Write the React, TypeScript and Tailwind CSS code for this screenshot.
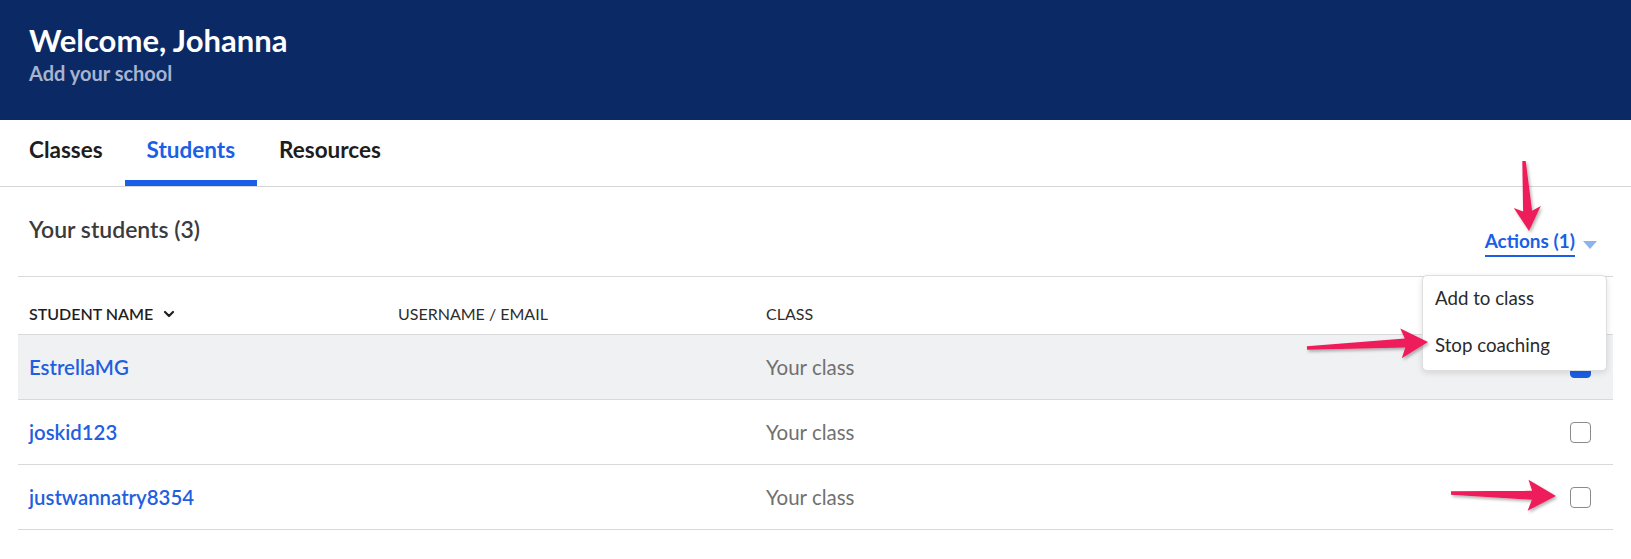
import React from 'react';
import { ChevronDown } from 'lucide-react';

const students = [
    { name: 'EstrellaMG', className: 'Your class', checked: true },
    { name: 'joskid123', className: 'Your class', checked: false },
    { name: 'justwannatry8354', className: 'Your class', checked: false },
];

// tapered annotation arrow, tail -> tip
function arrowPoints(tx: number, ty: number, px: number, py: number, headLen: number, headW: number, tailW = 3.5, neckW = 9) {
    const dx = px - tx;
    const dy = py - ty;
    const len = Math.hypot(dx, dy);
    const ux = dx / len;
    const uy = dy / len;
    const nx = -uy;
    const ny = ux;
    const bx = px - ux * headLen;
    const by = py - uy * headLen;
    const nbx = px - ux * (headLen - 4);
    const nby = py - uy * (headLen - 4);
    const pts = [
        [tx + nx * tailW / 2, ty + ny * tailW / 2],
        [nbx + nx * neckW / 2, nby + ny * neckW / 2],
        [bx + nx * headW / 2, by + ny * headW / 2],
        [px, py],
        [bx - nx * headW / 2, by - ny * headW / 2],
        [nbx - nx * neckW / 2, nby - ny * neckW / 2],
        [tx - nx * tailW / 2, ty - ny * tailW / 2],
    ];
    return pts.map((p) => p.map((v) => v.toFixed(1)).join(',')).join(' ');
}

const Arrows: React.FC = () => (
    <svg className="pointer-events-none absolute left-0 top-0" width="1631" height="559" viewBox="0 0 1631 559">
        <defs>
            <filter id="arrowShadow" x="-20%" y="-20%" width="140%" height="140%">
                <feDropShadow dx="1.5" dy="2" stdDeviation="1.5" floodColor="#000" floodOpacity="0.3" />
            </filter>
        </defs>
        <g fill="#ee1d5a" filter="url(#arrowShadow)">
            <polygon points={arrowPoints(1524, 161, 1529, 231, 24, 27)} />
            <polygon points={arrowPoints(1307, 348, 1428, 342, 27, 30)} />
            <polygon points={arrowPoints(1451, 493, 1556, 496, 28, 31)} />
        </g>
    </svg>
);

const Checkbox: React.FC<{ checked: boolean }> = ({ checked }) => (
    <div
        className={
            checked
                ? 'w-[21px] h-[21px] rounded-[4px] bg-[#1a5fe6] border border-[#1a5fe6]'
                : 'w-[21px] h-[21px] rounded-[4px] bg-white border-[1.5px] border-[#8a8a8a]'
        }
    />
);

export default function App() {
    return (
        <div className="relative w-[1631px] h-[559px] overflow-hidden bg-white font-['Lato',sans-serif]">
            {/* header */}
            <div className="h-[120px] bg-[#0b2a65] px-[29px] pt-[22px]">
                <h1 className="text-[31px] leading-[36px] font-bold text-white">Welcome, Johanna</h1>
                <p className="mt-[3px] text-[20px] leading-[24px] font-bold text-[#a7b4cf]">Add your school</p>
            </div>

            {/* tabs */}
            <div className="flex h-[67px] pl-[7px] border-b border-[#d6d6d6]">
                <div className="flex items-center px-[22px] pb-[6px] text-[22.5px] font-bold text-[#1d1d1d]">Classes</div>
                <div className="flex items-center px-[22px] pb-[1px] text-[22.5px] font-bold text-[#1a5fe6] border-b-[6px] border-[#1a5fe6]">
                    Students
                </div>
                <div className="flex items-center px-[22px] pb-[6px] text-[22.5px] font-bold text-[#1d1d1d]">Resources</div>
            </div>

            {/* title row */}
            <div className="flex justify-between h-[89px] pl-[29px] pr-[34px]">
                <h2 className="pt-[27px] text-[23px] leading-[30px] font-semibold text-[#3b3b3b]">Your students (3)</h2>
                <div className="self-end pb-[19px] flex items-center gap-[8px]">
                    <span className="text-[19px] leading-[24px] font-bold text-[#1a5fe6] border-b-2 border-[#1a5fe6] pb-[2px]">
                        Actions (1)
                    </span>
                    <span className="w-0 h-0 border-l-[7px] border-r-[7px] border-t-[8px] border-l-transparent border-r-transparent border-t-[#8fb1ee] mt-[3px]" />
                </div>
            </div>

            {/* table */}
            <div className="mx-[18px] border-t border-[#d9d9d9]">
                <div className="grid grid-cols-[369px_368px_1fr_auto] h-[58px] items-end pb-[9px] border-b border-[#d9d9d9] text-[16px] leading-[22px] text-[#2d2d2d]">
                    <div className="pl-[11px] flex items-center gap-[8px] font-semibold text-[#1f1f1f]">
                        STUDENT NAME
                        <ChevronDown size={16} strokeWidth={3.2} />
                    </div>
                    <div className="pl-[11px]">USERNAME / EMAIL</div>
                    <div className="pl-[11px]">CLASS</div>
                    <div />
                </div>
                {students.map((s) => (
                    <div
                        key={s.name}
                        className={
                            s.checked
                                ? 'grid grid-cols-[369px_368px_1fr_auto] h-[65px] items-center border-b border-[#d9d9d9] bg-[#f0f1f3]'
                                : 'grid grid-cols-[369px_368px_1fr_auto] h-[65px] items-center border-b border-[#d9d9d9] bg-white'
                        }
                    >
                        <div className="pl-[11px] text-[20.4px] font-semibold text-[#1f5fe0]">{s.name}</div>
                        <div className="pl-[11px]" />
                        <div className="pl-[11px] text-[20.5px] text-[#707070]">{s.className}</div>
                        <div className="pr-[22px]">
                            <Checkbox checked={s.checked} />
                        </div>
                    </div>
                ))}
            </div>

            {/* actions dropdown */}
            <div className="absolute left-[1422px] top-[275px] w-[185px] rounded-[5px] border border-[#dedede] bg-white shadow-[0_2px_6px_rgba(0,0,0,0.12)]">
                <div className="h-[44px] flex items-center px-[12px] text-[18.7px] text-[#2a2a2a]">Add to class</div>
                <div className="h-[50px] flex items-center px-[12px] text-[18.7px] text-[#2a2a2a]">Stop coaching</div>
            </div>

            <Arrows />
        </div>
    );
}
